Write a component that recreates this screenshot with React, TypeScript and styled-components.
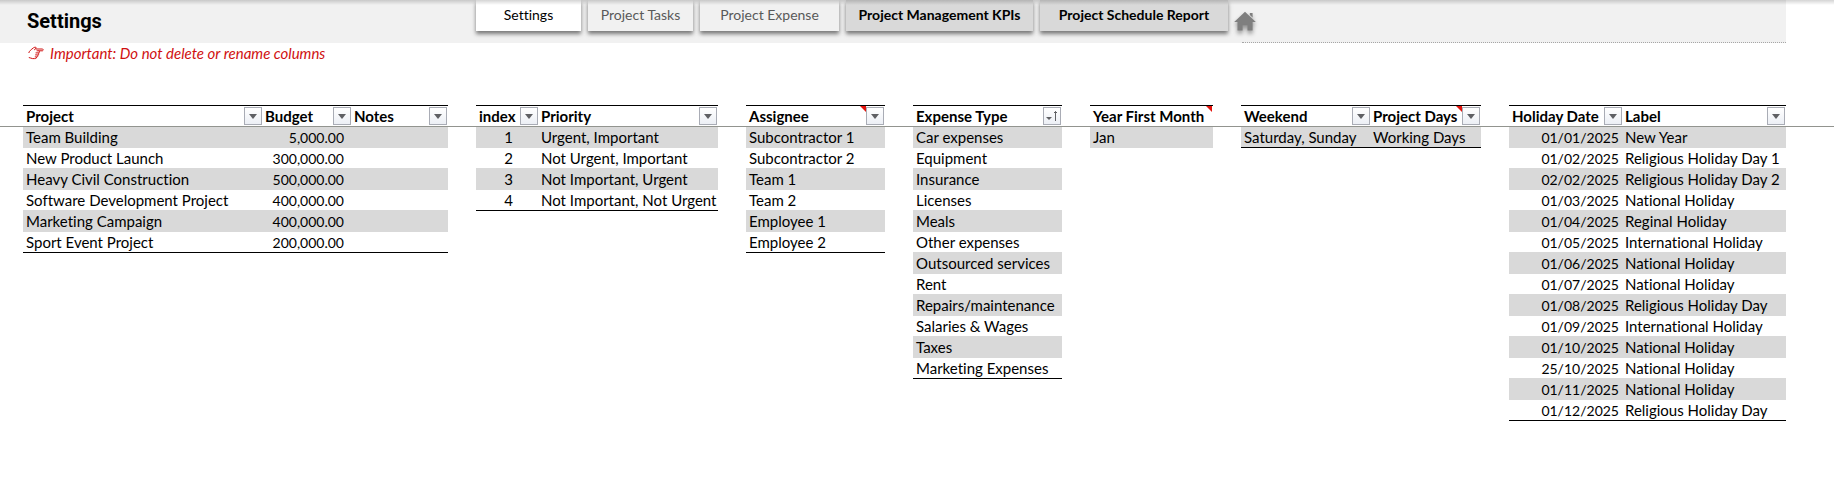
import React from "react";
import styled, { createGlobalStyle, css } from "styled-components";

const GlobalStyle = createGlobalStyle`
  *, *::before, *::after { box-sizing: border-box; }
  body {
    margin: 0;
    background: #ffffff;
    color: #000000;
    font-family: Lato, "Liberation Sans", sans-serif;
    font-size: 15px;
    font-variant-ligatures: none;
    line-height: 20px;
  }
`;

const Page = styled.div`
  position: relative;
  min-height: 100vh;

  &::before {
    content: "";
    position: absolute;
    inset: 0 0 auto;
    height: 5px;
    background: linear-gradient(rgba(0, 0, 0, 0.17), rgba(0, 0, 0, 0));
    pointer-events: none;
    z-index: 2;
  }
`;

const TopBar = styled.header`
  display: flex;
  height: 43px;
  margin-right: 48px;
  background: #f1f1f1;
`;

const Title = styled.h1`
  flex: none;
  width: 476px;
  margin: 0;
  padding: 9px 0 0 27px;
  font: 700 20px/24px Roboto, "Liberation Sans", sans-serif;
`;

const Tabs = styled.nav`
  display: flex;
  flex: none;
  gap: 7px;
  font-size: 14px;
`;

type Tone = "active" | "plain" | "report";

const tones = {
  active: css`background: #ffffff; color: #000000;`,
  plain: css`background: #f1f1f1; color: #595959;`,
  report: css`background: #d9d9d9; color: #000000; font-weight: 700;`,
};

const Tab = styled.a<{ $tone: Tone; $width: number }>`
  width: ${(p) => p.$width}px;
  height: 31px;
  padding-top: 5px;
  text-align: center;
  text-decoration: none;
  white-space: nowrap;
  box-shadow: 0 3px 4px rgba(0, 0, 0, 0.5);
  ${(p) => tones[p.$tone]}
`;

const RuledArea = styled.div`
  flex: 1;
  margin-left: 14px;
  border-bottom: 1px dotted #a6a6a6;
`;

const HomeLink = styled.a`
  display: block;
  width: 22px;
  margin: 11px 0 0 -8px;

  svg {
    display: block;
    filter: drop-shadow(0 3px 2px rgba(0, 0, 0, 0.4));
  }
`;

const Notice = styled.p`
  display: flex;
  align-items: center;
  gap: 6px;
  height: 20px;
  margin: 0 0 42px;
  padding-left: 28px;
  color: #d01010;
  font-style: italic;
`;

const Tables = styled.main`
  position: relative;
  display: grid;
  grid-template-columns:
    minmax(max-content, 425fr) minmax(max-content, 242fr) minmax(max-content, 139fr)
    minmax(max-content, 149fr) minmax(max-content, 123fr) minmax(max-content, 240fr)
    minmax(max-content, 277fr);
  gap: 28px;
  align-items: start;
  padding: 0 48px 24px 23px;

  &::after {
    content: "";
    position: absolute;
    top: 21px;
    left: 0;
    right: 0;
    height: 1px;
    background: #92948f;
  }
`;

const Table = styled.table<{ $closed: boolean }>`
  width: 100%;
  border-spacing: 0;
  white-space: nowrap;

  tbody tr:nth-child(odd) td {
    background: #d9d9d9;
    box-shadow: 0 1px #d9d9d9;
  }

  ${(p) =>
    p.$closed &&
    css`
      tbody tr:last-child td {
        height: 22px;
        border-bottom: 1px solid #000000;
        box-shadow: none;
      }
    `}
`;

type Align = "left" | "center" | "date" | "amount";

const figures = css`
  text-align: right;
  font-size: 14px;
  line-height: 19px;
`;

const cellAlign = {
  left: css`padding: 1px 0 0 3px;`,
  center: css`padding: 1px 0 0 3px; text-align: center;`,
  date: css`padding: 2px 3px 0; ${figures}`,
  amount: css`padding: 2px 7px 0 3px; ${figures}`,
};

const HeadCell = styled.th<{ $width?: number }>`
  position: relative;
  width: ${(p) => (p.$width ? `${p.$width}px` : "auto")};
  height: 21px;
  padding: 0 0 0 3px;
  border-top: 1px solid #000000;
  text-align: left;

  &:last-child {
    padding-right: 1px;
  }
`;

const HeadContent = styled.div`
  display: flex;
  justify-content: space-between;
  align-items: center;
  height: 20px;
`;

const Cell = styled.td<{ $align: Align }>`
  height: 21px;
  vertical-align: top;
  ${(p) => cellAlign[p.$align]}
`;

const FilterButton = styled.button`
  display: grid;
  place-items: center;
  flex: none;
  width: 18px;
  height: 18px;
  padding: 0;
  border: 1px solid #a9acb5;
  background: linear-gradient(#ffffff, #eceff5);
`;

const NoteMark = styled.span<{ $inset: boolean }>`
  position: absolute;
  top: 0;
  right: ${(p) => (p.$inset ? 19 : 1)}px;
  width: 6px;
  height: 6px;
  background: #e3120b;
  clip-path: polygon(0 0, 100% 0, 100% 100%);
`;

const HandIcon = () => (
  <svg width="16" height="14" viewBox="0 0 16 14" fill="none" stroke="currentColor" strokeWidth="1" aria-hidden="true">
    <path d="M.8 7C1 5.2 3.2 3.6 5.5 1.8 6.5 1 8.4 1 8.2 2 8 2.7 6.8 3.2 6.2 3.9M7.5 3H14.3C15.6 3 15.4 4.8 14.2 4.8H8.6M10.7 4.9C12 5.2 11.8 6.9 10.4 6.9H7.6M10.2 7C11.3 7.3 11 8.9 9.8 8.9H7.2M9.4 9C10.4 9.5 9.9 10.9 8.8 10.9H6.8M8.5 11C8.7 12.4 8 12.6 6.5 12.6H4.6C3 12.6 2.4 11.5.8 11.5" />
  </svg>
);

const HomeIcon = () => (
  <svg width="22" height="20" viewBox="0 0 22 20" fill="#7f7f7f" aria-hidden="true">
    <path d="M11 .8 21.8 11H18.6V19.5H13.5V14.3H8.6V19.5H3.5V11H.2Z" />
    <path d="M15.8 2H18.6V6.6L15.8 4.1Z" />
  </svg>
);

const ArrowIcon = () => (
  <svg width="8" height="5" viewBox="0 0 8 5" aria-hidden="true">
    <path d="M0 0H8L4 5Z" fill="#5f6064" />
  </svg>
);

const SortedIcon = () => (
  <svg width="12" height="12" viewBox="0 0 12 12" aria-hidden="true">
    <path d="M0 7H6L3 10Z" fill="#5f6064" />
    <path d="M9.5 11V1.5M8 3 9.5 1.5 11 3" fill="none" stroke="#5f6064" />
  </svg>
);

interface Column {
  label: string;
  width?: number;
  align?: Align;
  filter?: "arrow" | "sorted" | "none";
  note?: boolean;
}

interface TableData {
  columns: Column[];
  rows: string[][];
  closed?: boolean;
}

const list = (...items: string[]) => items.map((item) => [item]);

const tables: TableData[] = [
  {
    columns: [{ label: "Project", width: 239 }, { label: "Budget", width: 89, align: "amount" }, { label: "Notes" }],
    rows: [
      ["Team Building", "5,000.00", ""],
      ["New Product Launch", "300,000.00", ""],
      ["Heavy Civil Construction", "500,000.00", ""],
      ["Software Development Project", "400,000.00", ""],
      ["Marketing Campaign", "400,000.00", ""],
      ["Sport Event Project", "200,000.00", ""],
    ],
  },
  {
    columns: [{ label: "index", width: 62, align: "center" }, { label: "Priority" }],
    rows: [
      ["1", "Urgent, Important"],
      ["2", "Not Urgent, Important"],
      ["3", "Not Important, Urgent"],
      ["4", "Not Important, Not Urgent"],
    ],
  },
  {
    columns: [{ label: "Assignee", note: true }],
    rows: list("Subcontractor 1", "Subcontractor 2", "Team 1", "Team 2", "Employee 1", "Employee 2"),
  },
  {
    columns: [{ label: "Expense Type", filter: "sorted" }],
    rows: list(
      "Car expenses", "Equipment", "Insurance", "Licenses", "Meals", "Other expenses",
      "Outsourced services", "Rent", "Repairs/maintenance", "Salaries & Wages", "Taxes", "Marketing Expenses"
    ),
  },
  {
    columns: [{ label: "Year First Month", filter: "none", note: true }],
    rows: list("Jan"),
    closed: false,
  },
  {
    columns: [{ label: "Weekend", width: 129 }, { label: "Project Days", note: true }],
    rows: [["Saturday, Sunday", "Working Days"]],
  },
  {
    columns: [{ label: "Holiday Date", width: 113, align: "date" }, { label: "Label" }],
    rows: [
      ["01/01/2025", "New Year"],
      ["01/02/2025", "Religious Holiday Day 1"],
      ["02/02/2025", "Religious Holiday Day 2"],
      ["01/03/2025", "National Holiday"],
      ["01/04/2025", "Reginal Holiday"],
      ["01/05/2025", "International Holiday"],
      ["01/06/2025", "National Holiday"],
      ["01/07/2025", "National Holiday"],
      ["01/08/2025", "Religious Holiday Day"],
      ["01/09/2025", "International Holiday"],
      ["01/10/2025", "National Holiday"],
      ["25/10/2025", "National Holiday"],
      ["01/11/2025", "National Holiday"],
      ["01/12/2025", "Religious Holiday Day"],
    ],
  },
];

const tabs: { label: string; tone: Tone; width: number }[] = [
  { label: "Settings", tone: "active", width: 105 },
  { label: "Project Tasks", tone: "plain", width: 105 },
  { label: "Project Expense", tone: "plain", width: 139 },
  { label: "Project Management KPIs", tone: "report", width: 187 },
  { label: "Project Schedule Report", tone: "report", width: 188 },
];

const SettingsTable = ({ columns, rows, closed = true }: TableData) => (
  <Table $closed={closed}>
    <thead>
      <tr>
        {columns.map(({ label, width, note, filter = "arrow" }) => (
          <HeadCell key={label} scope="col" $width={width}>
            <HeadContent>
              {label}
              {filter !== "none" && (
                <FilterButton type="button" aria-label={`Filter ${label}`}>
                  {filter === "sorted" ? <SortedIcon /> : <ArrowIcon />}
                </FilterButton>
              )}
            </HeadContent>
            {note && <NoteMark $inset={filter !== "none"} />}
          </HeadCell>
        ))}
      </tr>
    </thead>
    <tbody>
      {rows.map((row) => (
        <tr key={row.join("|")}>
          {row.map((value, i) => (
            <Cell key={columns[i].label} $align={columns[i].align ?? "left"}>
              {value}
            </Cell>
          ))}
        </tr>
      ))}
    </tbody>
  </Table>
);

export default function App() {
  return (
    <Page>
      <GlobalStyle />
      <TopBar>
        <Title>Settings</Title>
        <Tabs>
          {tabs.map((tab) => (
            <Tab key={tab.label} href="#" $tone={tab.tone} $width={tab.width}>
              {tab.label}
            </Tab>
          ))}
        </Tabs>
        <RuledArea>
          <HomeLink href="#" aria-label="Home">
            <HomeIcon />
          </HomeLink>
        </RuledArea>
      </TopBar>
      <Notice>
        <HandIcon />
        Important: Do not delete or rename columns
      </Notice>
      <Tables>
        {tables.map((table) => (
          <SettingsTable key={table.columns[0].label} {...table} />
        ))}
      </Tables>
    </Page>
  );
}
